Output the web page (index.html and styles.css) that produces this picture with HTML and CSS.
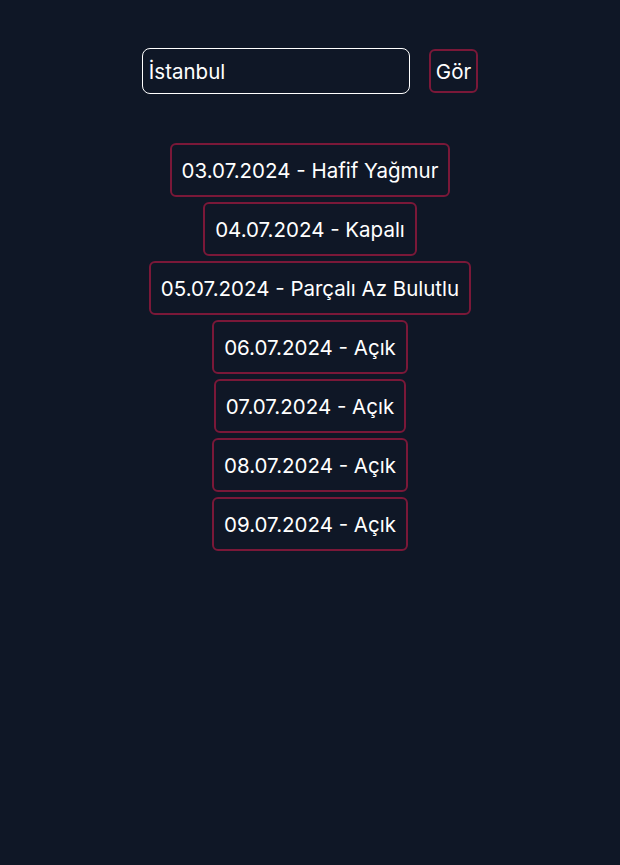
FILE: index.html
```html
<!DOCTYPE html>
<html lang="tr">
<head>
<meta charset="utf-8">
<link rel="stylesheet" href="styles.css">
</head>
<body>
<div class="app">
  <form class="search">
    <input class="city" type="text" value="İstanbul">
    <button class="go" type="button">Gör</button>
  </form>
  <ul class="list">
    <li class="day">03.07.2024 - Hafif Yağmur</li>
    <li class="day">04.07.2024 - Kapalı</li>
    <li class="day">05.07.2024 - Parçalı Az Bulutlu</li>
    <li class="day">06.07.2024 - Açık</li>
    <li class="day">07.07.2024 - Açık</li>
    <li class="day">08.07.2024 - Açık</li>
    <li class="day">09.07.2024 - Açık</li>
  </ul>
</div>
</body>
</html>
```
FILE: styles.css
```css
html, body {
  margin: 0;
  padding: 0;
  background: #0f1726;
  height: 100%;
}
body {
  font-family: Inter, "Noto Sans", sans-serif;
  color: #ffffff;
}
.app {
  display: flex;
  flex-direction: column;
  align-items: center;
  padding-top: 48px;
}
.search {
  display: flex;
  align-items: center;
  gap: 19px;
  margin: 0;
}
.city {
  box-sizing: border-box;
  width: 268px;
  height: 46px;
  background: #0f1726;
  border: 1px solid #ffffff;
  border-radius: 8px;
  color: #ffffff;
  font-family: inherit;
  font-size: 20.5px;
  padding: 0 6px;
  outline: none;
}
.go {
  box-sizing: border-box;
  height: 44px;
  padding: 0 5px;
  background: #0f1726;
  border: 2px solid #7a1838;
  border-radius: 6px;
  color: #ffffff;
  font-family: inherit;
  font-size: 20.5px;
}
.list {
  list-style: none;
  margin: 49px 0 0;
  padding: 0;
  display: flex;
  flex-direction: column;
  align-items: center;
  gap: 5px;
}
.day {
  box-sizing: border-box;
  height: 54px;
  display: flex;
  align-items: center;
  padding: 0 10px;
  border: 2px solid #7a1838;
  border-radius: 6px;
  font-size: 20.5px;
}
```
